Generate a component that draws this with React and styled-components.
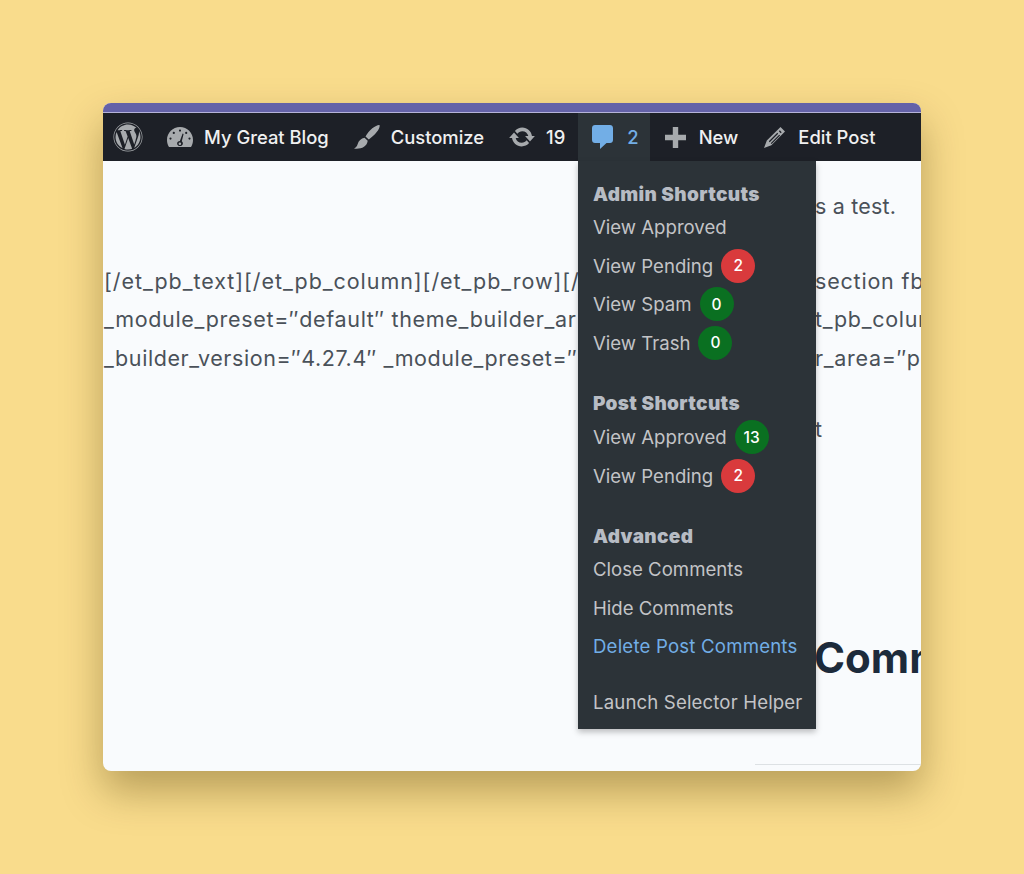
import React from "react";
import styled, { createGlobalStyle } from "styled-components";
import { FaWordpress } from "react-icons/fa";

const Global = createGlobalStyle`
  html, body { margin: 0; padding: 0; background: #f9dc8c; }
  body { font-family: Inter, "Liberation Sans", sans-serif; }
  * { box-sizing: border-box; }
`;
const Page = styled.div`
  width: 1024px; height: 874px; padding: 103px 103px 0; background: #f9dc8c; overflow: hidden;
`;
const Win = styled.div`
  position: relative; width: 818px; height: 668px; background: #f9fbfd; border-radius: 8px; overflow: hidden;
  box-shadow: 0 20px 40px rgba(70, 50, 0, 0.36);
`;
const Shell = styled.div`
  position: relative; width: 818px; height: 668px;
`;
const Strip = styled.div`
  height: 10px; background: #6462a8; border-bottom: 1px solid #b5b3d8;
`;
const Bar = styled.nav`
  height: 48px; background: #1d2027; display: flex; align-items: stretch; color: #f0f0f1; font-size: 18.4px; font-weight: 500;
`;
const BarItem = styled.div`
  display: flex; align-items: center; gap: ${p => p.$gap ?? 10}px; padding: 0 ${p => p.$pr ?? 12}px 0 ${p => p.$pl ?? 12}px;
  background: ${p => p.$active ? "#2c3338" : "transparent"};
  color: ${p => p.$active ? "#72aee6" : "#f0f0f1"};
  white-space: nowrap;
`;
const Icon = styled.svg`
  display: block; flex: none; fill: ${p => p.$fill ?? "#a7aaad"};
`;
const Logo = styled(FaWordpress)`
  display: block; color: #a7aaad; width: 30px; height: 30px;
`;
const Body = styled.main`
  height: 610px; padding-top: 26px; color: #4a5159; font-size: 21.5px; line-height: 38.5px; overflow: hidden;
`;
const TextRow = styled.div`
  display: grid; grid-template-columns: 475px 1fr; height: 38.5px; margin-top: ${p => p.$mt ?? 0}px; white-space: nowrap;
`;
const Clip = styled.span`
  overflow: hidden; padding-left: 1px; letter-spacing: ${p => p.$ls ?? 0}px;
`;
const Side = styled.span`
  overflow: hidden; padding-left: 237px; letter-spacing: ${p => p.$ls ?? 0}px;
`;
const Heading = styled.h2`
  margin: 184px 0 0; padding-left: 711px; font-size: 42px; line-height: 50px; font-weight: 700; color: #1d2b3b; white-space: nowrap; overflow: hidden;
`;
const Rule = styled.div`
  height: 1px; width: 166px; margin: 81px 0 0 652px; background: #dde1e4;
`;
const Menu = styled.aside`
  position: absolute; left: 475px; top: 58px; width: 238px; height: 568px; padding: 19.9px 15px; background: #2c3338;
  box-shadow: 0 3px 6px rgba(0, 0, 0, 0.25); color: #c3c4c7;
`;
const Group = styled.section`
  display: flex; flex-direction: column; margin-bottom: ${p => p.$mb ?? 0}px;
`;
const GroupTitle = styled.div`
  height: ${p => p.$h ?? 27}px; line-height: 27px; font-size: 19px; font-weight: 900; letter-spacing: 0.35px; color: #b7bcc4; white-space: nowrap;
`;
const Item = styled.div`
  display: flex; align-items: center; gap: 8px; height: 38.5px; font-size: 18.6px; white-space: nowrap;
  letter-spacing: ${p => p.$ls ?? 0}px;
  color: ${p => p.$link ? "#72aee6" : "#c3c4c7"};
`;
const Badge = styled.span`
  display: inline-flex; align-items: center; justify-content: center; width: 34px; height: 34px; border-radius: 50%;
  font-size: 15.5px; font-weight: 500; color: #fff; background: ${p => p.$red ? "#d93a3c" : "#0a7021"};
`;

const Gauge = () => (
  <Icon width="26" height="20" viewBox="0 0 26 20">
    <path fillRule="evenodd" d="M13 0C5.800 0 0 5.800 0 13c0 2.600.7 5 2 7h22c1.300-2 2-4.400 2-7C26 5.800 20.200 0 13 0zM13 2.500a1.100 1.100 0 1 1 0 2.200 1.100 1.100 0 0 1 0-2.200zM6.800 4.800a1.100 1.100 0 1 1 0 2.200 1.100 1.100 0 0 1 0-2.200zM19.200 4.800a1.100 1.100 0 1 1 0 2.200 1.100 1.100 0 0 1 0-2.200zM3.500 10.500a1.100 1.100 0 1 1 0 2.200 1.100 1.100 0 0 1 0-2.200zM22.500 10.500a1.100 1.100 0 1 1 0 2.200 1.100 1.100 0 0 1 0-2.200zM15.600 6.500l1 .4-1.800 7.400c.7.600 1.100 1.400 1.100 2.200 0 1.500-1.300 2.600-2.900 2.600s-2.900-1.100-2.900-2.600c0-1.400 1.200-2.500 2.800-2.600zM12.900 15.400a1.300 1.300 0 1 0 0 2.600 1.300 1.300 0 0 0 0-2.600z" />
  </Icon>
);
const Brush = () => (
  <Icon width="26" height="24" viewBox="0 0 26 24">
    <path d="M25.500 0c.6 1.500-.5 4.300-2.800 7.100-2.300 2.900-5 5.600-7.900 7.300l-3.300-2.900c1.500-2.900 3.800-5.800 6.800-8.300C21.300 1.300 24.200-.2 25.500 0z" />
    <path d="M10.500 12.800l3.200 2.900c-.3 2.500-1.500 4.500-3.700 6C7.300 23.500 3.500 24 0 23.500c1.900-1 3.100-2.400 3.700-4.500.8-3 3.400-5.500 6.800-6.200z" />
  </Icon>
);
const Sync = () => (
  <Icon width="28" height="28" viewBox="0 0 20 20">
    <path d="M10.200 3.280c3.530 0 6.430 2.610 6.920 6h2.080l-3.500 4-3.500-4h2.320c-.45-1.970-2.210-3.440-4.320-3.440-1.450 0-2.730.71-3.540 1.780L4.950 5.660C6.230 4.200 8.110 3.280 10.200 3.280zm-.4 13.440c-3.520 0-6.430-2.610-6.920-6H.8l3.500-4c1.170 1.330 2.330 2.670 3.500 4H5.480c.45 1.970 2.210 3.440 4.320 3.440 1.450 0 2.730-.71 3.540-1.780l1.710 1.950c-1.280 1.460-3.150 2.380-5.250 2.380z" />
  </Icon>
);
const Bubble = () => (
  <Icon $fill="#72aee6" width="21" height="24" viewBox="0 0 21 24">
    <path d="M3 0h15c1.700 0 3 1.300 3 3v12c0 1.700-1.300 3-3 3h-3.500L8 24v-6H3c-1.700 0-3-1.300-3-3V3c0-1.700 1.300-3 3-3z" />
  </Icon>
);
const Plus = () => (
  <Icon width="21" height="21" viewBox="0 0 21 21">
    <path d="M7.800 0h5.400v7.800H21v5.400h-7.800V21H7.800v-7.800H0V7.800h7.800z" />
  </Icon>
);
const Pencil = () => (
  <Icon width="21" height="21" viewBox="0 0 21 21">
    <path fillRule="evenodd" d="M16.500 0L21 4.500 7.400 18.200 0 21l2.800-7.400zM15.800 3.300l-1 1 1.900 1.900 1-1zM13.300 5.800L4.800 14.300l.9.900 8.500-8.500zM15.200 7.700L6.700 16.200l.9.900 8.500-8.500z" />
  </Icon>
);

export default function App() {
  return (
    <Page>
      <Global />
      <Win>
        <Shell>
          <Strip />
          <Bar>
            <BarItem $pl={10} $pr={12}><Logo /></BarItem>
            <BarItem $pl={12} $pr={12} $gap={11}><Gauge />My Great Blog</BarItem>
            <BarItem $pl={13} $pr={12} $gap={11}><Brush />Customize</BarItem>
            <BarItem $pl={12} $pr={13} $gap={10}><Sync />19</BarItem>
            <BarItem $active $pl={14} $pr={11} $gap={14}><Bubble />2</BarItem>
            <BarItem $pl={15} $pr={13} $gap={13}><Plus />New</BarItem>
            <BarItem $pl={13} $pr={12} $gap={13}><Pencil />Edit Post</BarItem>
          </Bar>
          <Body>
            <TextRow><Clip /><Side $ls={0.2}>s a test.</Side></TextRow>
            <TextRow $mt={36}><Clip $ls={0.95}>[/et_pb_text][/et_pb_column][/et_pb_row][/e</Clip><Side $ls={0.8}>section fb</Side></TextRow>
            <TextRow><Clip $ls={0.67}>_module_preset=″default″ theme_builder_ar</Clip><Side $ls={0.7}>t_pb_colum</Side></TextRow>
            <TextRow><Clip $ls={0.58}>_builder_version=″4.27.4″ _module_preset=″</Clip><Side $ls={0.7}>r_area=″p</Side></TextRow>
            <TextRow $mt={33}><Clip /><Side>t</Side></TextRow>
            <Heading>Comm</Heading>
            <Rule />
          </Body>
          <Menu>
            <Group $mb={28}>
              <GroupTitle>Admin Shortcuts</GroupTitle>
              <Item>View Approved</Item>
              <Item>View Pending <Badge $red>2</Badge></Item>
              <Item>View Spam <Badge>0</Badge></Item>
              <Item>View Trash <Badge>0</Badge></Item>
            </Group>
            <Group $mb={28}>
              <GroupTitle $h={28}>Post Shortcuts</GroupTitle>
              <Item>View Approved <Badge>13</Badge></Item>
              <Item>View Pending <Badge $red>2</Badge></Item>
            </Group>
            <Group $mb={17.5}>
              <GroupTitle>Advanced</GroupTitle>
              <Item>Close Comments</Item>
              <Item>Hide Comments</Item>
              <Item $link $ls={0.2}>Delete Post Comments</Item>
            </Group>
            <Group>
              <Item $ls={0.15}>Launch Selector Helper</Item>
            </Group>
          </Menu>
        </Shell>
      </Win>
    </Page>
  );
}
